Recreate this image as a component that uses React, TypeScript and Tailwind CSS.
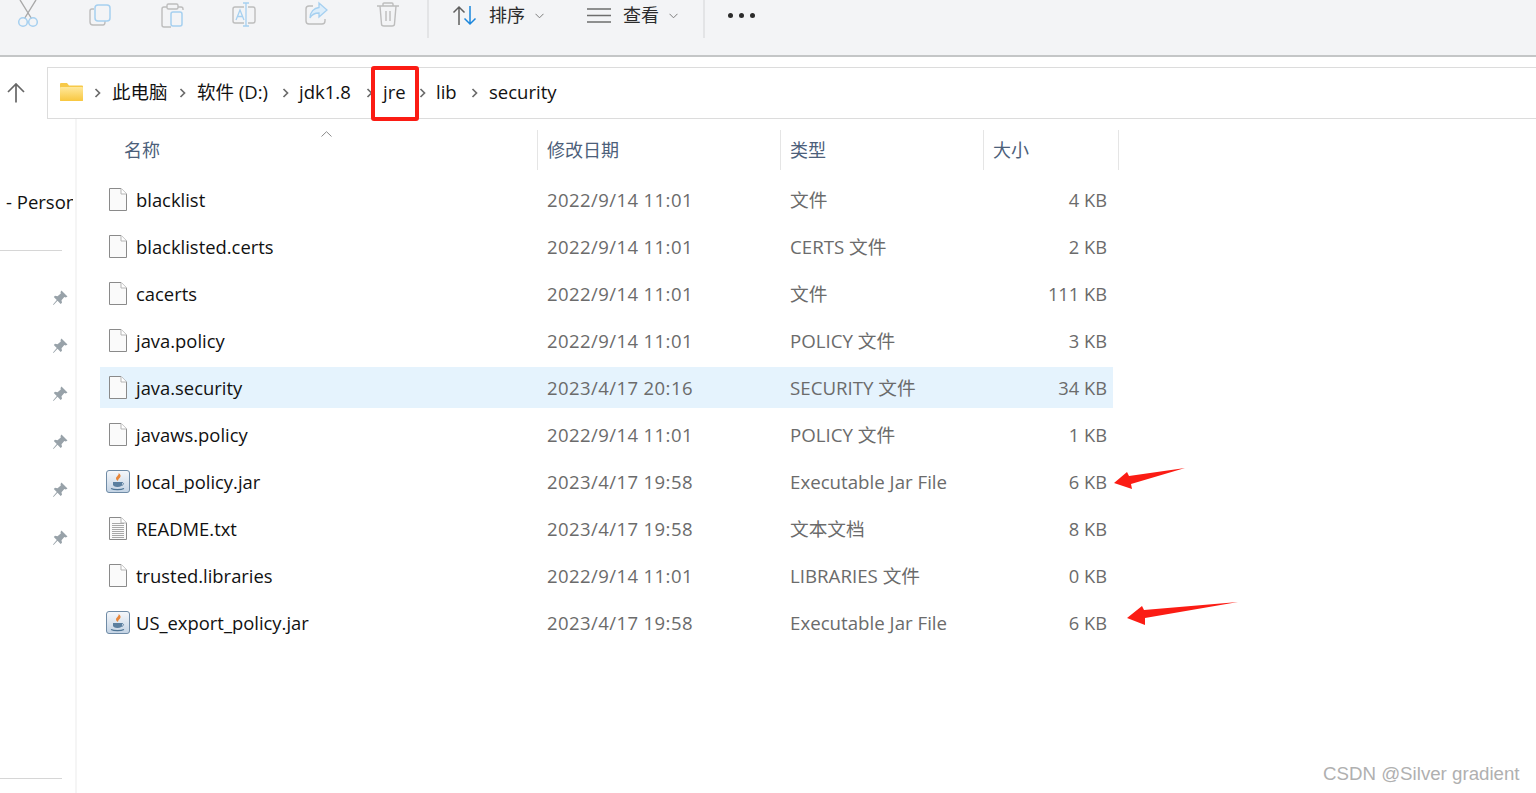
import React from "react";

type Row = { n: string; d: string; t: string; s: string; icon: "file" | "jar" | "txt"; sel?: boolean };
const rows: Row[] = [
  { n: "blacklist", d: "2022/9/14 11:01", t: "文件", s: "4 KB", icon: "file" },
  { n: "blacklisted.certs", d: "2022/9/14 11:01", t: "CERTS 文件", s: "2 KB", icon: "file" },
  { n: "cacerts", d: "2022/9/14 11:01", t: "文件", s: "111 KB", icon: "file" },
  { n: "java.policy", d: "2022/9/14 11:01", t: "POLICY 文件", s: "3 KB", icon: "file" },
  { n: "java.security", d: "2023/4/17 20:16", t: "SECURITY 文件", s: "34 KB", icon: "file", sel: true },
  { n: "javaws.policy", d: "2022/9/14 11:01", t: "POLICY 文件", s: "1 KB", icon: "file" },
  { n: "local_policy.jar", d: "2023/4/17 19:58", t: "Executable Jar File", s: "6 KB", icon: "jar" },
  { n: "README.txt", d: "2023/4/17 19:58", t: "文本文档", s: "8 KB", icon: "txt" },
  { n: "trusted.libraries", d: "2022/9/14 11:01", t: "LIBRARIES 文件", s: "0 KB", icon: "file" },
  { n: "US_export_policy.jar", d: "2023/4/17 19:58", t: "Executable Jar File", s: "6 KB", icon: "jar" },
];

function FileIcon({ lines }: { lines?: boolean }) {
  return (
    <svg width="18" height="23" viewBox="0 0 18 23" className="shrink-0">
      <path d="M0.5 0.5H12L17.5 6V22.5H0.5Z" fill="#fafafa" stroke="#8a8a8a" />
      <path d="M12 0.5V6H17.5" fill="#fff" stroke="#b5b5b5" />
      {lines && [6, 8, 10, 12, 14, 16, 18, 20].map((y) => <path key={y} d={`M3 ${y + 0.5}H15`} stroke="#a8a8a8" />)}
    </svg>
  );
}

function JarIcon() {
  return (
    <svg width="24" height="23" viewBox="0 0 24 23" className="shrink-0">
      <defs>
        <linearGradient id="jarbg" x1="0" y1="0" x2="0" y2="1">
          <stop offset="0" stopColor="#f6f8fb" />
          <stop offset="1" stopColor="#c3d3e4" />
        </linearGradient>
      </defs>
      <rect x="0.5" y="0.5" width="23" height="22" rx="2.5" fill="url(#jarbg)" stroke="#6f8ba6" />
      <path d="M12.5 3C13.5 5 10 6.500 10 8.500C10 9.500 11 10.500 12 11C11.500 9.500 14 8 14.500 6.500C15 5.500 14 4 12.500 3Z" fill="#e8863a" />
      <path d="M7 12H16V14.500C16 16 14.500 17 11.500 17C8.500 17 7 16 7 14.500Z" fill="#5b7f9f" />
      <path d="M16 12.500C18 12.500 18 15 15.500 15.500" fill="none" stroke="#5b7f9f" />
      <path d="M5 18.500C8 20 15 20 18 18.500" fill="none" stroke="#4f7595" strokeWidth="1.200" />
    </svg>
  );
}

function Pin() {
  return (
    <svg width="16" height="16" viewBox="0 0 16 16">
      <path d="M9.500 0.500L15.500 6.500L13.800 7.500L12.300 7L9.500 10.300L10 12.800L8.700 14L5.500 10.800L1.500 15L1 14.500L4.800 10L1.800 7L3 5.800L5.500 6.300L8.800 3.500L8.500 2Z" fill="#98a2a9" />
    </svg>
  );
}

function Chevron() {
  return (
    <svg width="7" height="10" viewBox="0 0 7 10" className="shrink-0">
      <path d="M1.500 1L5.500 5L1.500 9" fill="none" stroke="#6b6b6b" strokeWidth="1.700" />
    </svg>
  );
}

function Down() {
  return (
    <svg width="9" height="6" viewBox="0 0 9 6" className="shrink-0">
      <path d="M0.500 0.800L4.500 4.800L8.500 0.800" fill="none" stroke="#7d7d7d" />
    </svg>
  );
}

const gray = "#bdbdbd";
const blue = "#a6d0f0";

function ToolIcons() {
  return (
    <div className="flex h-[38px] w-[427px] shrink-0 items-start">
      <svg width="427" height="38" viewBox="0 0 427 38" className="block">
        <path d="M20 0L31.500 18.500M36 0L24.500 18.500" fill="none" stroke="#a8a8a8" strokeWidth="1.400" />
        <circle cx="23" cy="22" r="4.300" fill="none" stroke={blue} strokeWidth="1.500" />
        <circle cx="33" cy="22" r="4.300" fill="none" stroke={blue} strokeWidth="1.500" />
        <path d="M94 9H92Q90 9 90 11V22Q90 25 93 25H103Q105 25 105 22V21" fill="none" stroke={gray} strokeWidth="1.400" />
        <rect x="95" y="5" width="15" height="16" rx="3" fill="none" stroke={blue} strokeWidth="1.500" />
        <path d="M167 7H164Q162 7 162 9V25Q162 27 164 27H171M178 7H181Q183 7 183 9V10" fill="none" stroke={gray} strokeWidth="1.400" />
        <rect x="167" y="4" width="11" height="5" rx="1.500" fill="none" stroke={gray} strokeWidth="1.400" />
        <rect x="171" y="12" width="11" height="14" rx="2" fill="none" stroke={blue} strokeWidth="1.500" />
        <path d="M244 7H235Q233 7 233 9V21Q233 23 235 23H244M248 7H253Q255 7 255 9V21Q255 23 253 23H248" fill="none" stroke={gray} strokeWidth="1.400" />
        <path d="M236 20L240 10L244 20M237.500 16.500H242.500" fill="none" stroke={blue} strokeWidth="1.300" />
        <path d="M243 3H249M246 3V26M243 26H249" fill="none" stroke={blue} strokeWidth="1.300" />
        <path d="M313 6H309Q306 6 306 9V21Q306 24 309 24H322Q325 24 325 21V19" fill="none" stroke={gray} strokeWidth="1.400" />
        <path d="M319 3L327 10L319 17V13C315 13 312 14 310 18C310 12 314 8 319 7.500Z" fill="#dcedfa" stroke={blue} strokeWidth="1.300" />
        <path d="M377 6H399M383 6V4Q383 3 384 3H392Q393 3 393 4V6M380 6L381.500 24Q381.500 26 384 26H392Q394.500 26 394.500 24L396 6M386 11V21M390 11V21" fill="none" stroke={gray} strokeWidth="1.400" />
      </svg>
    </div>
  );
}

function Toolbar() {
  return (
    <div className="h-[57px] shrink-0 border-b-[2px] border-[#c4c6c7] bg-[#f3f4f6]">
      <div className="flex h-[38px] items-start text-[18px] text-[#2b2b2b]">
        <ToolIcons />
        <div className="h-[38px] w-[2px] shrink-0 bg-[#e3e4e6]" />
        <div className="ml-[23px] flex h-[31px] w-[251px] shrink-0 items-center">
          <svg width="25" height="21" viewBox="0 0 25 21" className="shrink-0">
            <path d="M7 20V2M1.500 7.500L7 2L12.500 7.500" fill="none" stroke="#5f5f5f" strokeWidth="1.500" />
            <path d="M18 1V19M12.500 13.500L18 19L23.500 13.500" fill="none" stroke="#1b86dc" strokeWidth="1.500" />
          </svg>
          <span className="ml-[12px] w-[46px] shrink-0">排序</span>
          <Down />
          <svg width="24" height="15" viewBox="0 0 24 15" className="ml-[43px] shrink-0">
            <path d="M0 1H24M0 7.500H24M0 14H24" stroke="#6e6e6e" strokeWidth="1.500" />
          </svg>
          <span className="ml-[12px] w-[46px] shrink-0">查看</span>
          <Down />
        </div>
        <div className="h-[38px] w-[2px] shrink-0 bg-[#e3e4e6]" />
        <div className="ml-[23px] flex h-[31px] items-center gap-[6px]">
          <i className="h-[5px] w-[5px] rounded-full bg-[#2b2b2b]" />
          <i className="h-[5px] w-[5px] rounded-full bg-[#2b2b2b]" />
          <i className="h-[5px] w-[5px] rounded-full bg-[#2b2b2b]" />
        </div>
      </div>
    </div>
  );
}

function AddressBar() {
  const crumbs: { c: string; box: string; gap: string }[] = [
    { c: "此电脑", box: "w-[85px]", gap: "ml-[11px]" },
    { c: "软件 (D:)", box: "w-[103px]", gap: "ml-[11px]" },
    { c: "jdk1.8", box: "w-[84px]", gap: "ml-[10px]" },
    { c: "jre", box: "w-[53px]", gap: "ml-[10px]" },
    { c: "lib", box: "w-[52px]", gap: "ml-[10px]" },
    { c: "security", box: "w-[100px]", gap: "ml-[11px]" },
  ];
  return (
    <div className="mt-[10px] flex h-[52px] shrink-0 items-center">
      <div className="flex w-[47px] shrink-0 pl-[7px]">
        <svg width="18" height="20" viewBox="0 0 18 20">
          <path d="M9 19.500V1M1 9L9 1L17 9" fill="none" stroke="#666" strokeWidth="1.700" />
        </svg>
      </div>
      <div className="flex h-[52px] flex-1 items-center border-y border-l border-[#dcdcdc] pl-[12px] text-[18.500px] text-[#111]">
        <svg width="23" height="18" viewBox="0 0 23 18" className="mr-[11px] shrink-0 -translate-y-px">
          <defs>
            <linearGradient id="fold" x1="0" y1="0" x2="0" y2="1">
              <stop offset="0" stopColor="#ffe89a" />
              <stop offset="1" stopColor="#f8c73f" />
            </linearGradient>
          </defs>
          <path d="M0 1Q0 0 1 0H7L9 2.500H22Q23 2.500 23 3.500V17Q23 18 22 18H1Q0 18 0 17Z" fill="#f7c948" />
          <rect x="0" y="4" width="23" height="14" rx="1" fill="url(#fold)" />
        </svg>
        {crumbs.map(({ c, box, gap }) => (
          <div key={c} className={`flex shrink-0 items-center ${box}`}>
            <Chevron />
            <span className={`${gap} -translate-y-px whitespace-nowrap`}>{c}</span>
          </div>
        ))}
      </div>
    </div>
  );
}

function Sidebar() {
  return (
    <div className="flex w-[77px] shrink-0 flex-col border-r-[2px] border-[#f5f5f5]">
      <div className="mt-[70px] h-[26px] w-[73px] overflow-hidden whitespace-nowrap pl-[6px] text-[18.500px] leading-[26px] text-[#111]">- Personal</div>
      <div className="mt-[35px] h-[1px] w-[62px] bg-[#d6d6d6]" />
      <div className="mt-[39px] flex w-[68px] flex-col items-end gap-[32px]">
        {[0, 1, 2, 3, 4, 5].map((i) => <Pin key={i} />)}
      </div>
      <div className="mt-[232px] h-[1px] w-[62px] bg-[#d6d6d6]" />
    </div>
  );
}

function Sep() {
  return <div className="h-[40px] w-[1px] shrink-0 bg-[#e5e5e5]" />;
}

function List() {
  return (
    <div className="flex-1 pt-[11px]">
      <div className="relative flex h-[40px] items-center text-[18px] text-[#4c607a]">
        <div className="flex w-[460px] shrink-0 items-center pl-[47px]">名称</div>
        <Sep />
        <div className="w-[242px] shrink-0 pl-[9px]">修改日期</div>
        <Sep />
        <div className="w-[202px] shrink-0 pl-[9px]">类型</div>
        <Sep />
        <div className="w-[134px] shrink-0 pl-[9px]">大小</div>
        <Sep />
        <svg width="11" height="6" viewBox="0 0 11 6" className="absolute left-[244px] top-[1px]">
          <path d="M0.500 5.500L5.500 0.700L10.500 5.500" fill="none" stroke="#8a8a8a" />
        </svg>
      </div>
      <div className="ml-[23px] mt-[9px] flex w-[1013px] flex-col gap-[6px]">
        {rows.map((r) => (
          <div key={r.n} className={`flex h-[41px] items-center ${r.sel ? "bg-[#e5f3fd]" : ""}`}>
            <div className="flex w-[447px] shrink-0 items-center text-[18.400px] text-[#111]">
              <div className="flex w-[36px] shrink-0 justify-center">
                {r.icon === "jar" ? <JarIcon /> : <FileIcon lines={r.icon === "txt"} />}
              </div>
              <span className="whitespace-nowrap">{r.n}</span>
            </div>
            <div className="w-[243px] shrink-0 whitespace-nowrap text-[18.500px] tracking-[0.42px] text-[#6b6b6b]">{r.d}</div>
            <div className="w-[190px] shrink-0 translate-y-px whitespace-nowrap text-[18.700px] text-[#6b6b6b]">{r.t}</div>
            <div className="w-[127px] shrink-0 whitespace-nowrap text-right text-[18.300px] text-[#6b6b6b]">{r.s}</div>
          </div>
        ))}
      </div>
    </div>
  );
}

export default function App() {
  return (
    <div className="relative flex h-[793px] w-[1536px] flex-col overflow-hidden bg-white font-['Open_Sans','Noto_Sans_CJK_SC',sans-serif]">
      <Toolbar />
      <AddressBar />
      <div className="flex min-h-0 flex-1">
        <Sidebar />
        <List />
      </div>
      <div className="absolute left-[371px] top-[66px] h-[55px] w-[48px] rounded-[3px] border-[4px] border-[#fb1c14]" />
      <svg className="absolute left-[1110px] top-[460px]" width="135" height="170" viewBox="0 0 135 170">
        <path d="M4 23L17 12L19 16L75 8L21 24L22 29Z" fill="#fb1c14" />
        <path d="M17 158L32 146L34 150L128 142L35 158L35 165Z" fill="#fb1c14" />
      </svg>
      <div className="absolute left-[1323px] top-[762px] font-['Liberation_Sans',sans-serif] text-[18.700px] leading-[24px] text-[#b0b0b0]">CSDN @Silver gradient</div>
    </div>
  );
}
